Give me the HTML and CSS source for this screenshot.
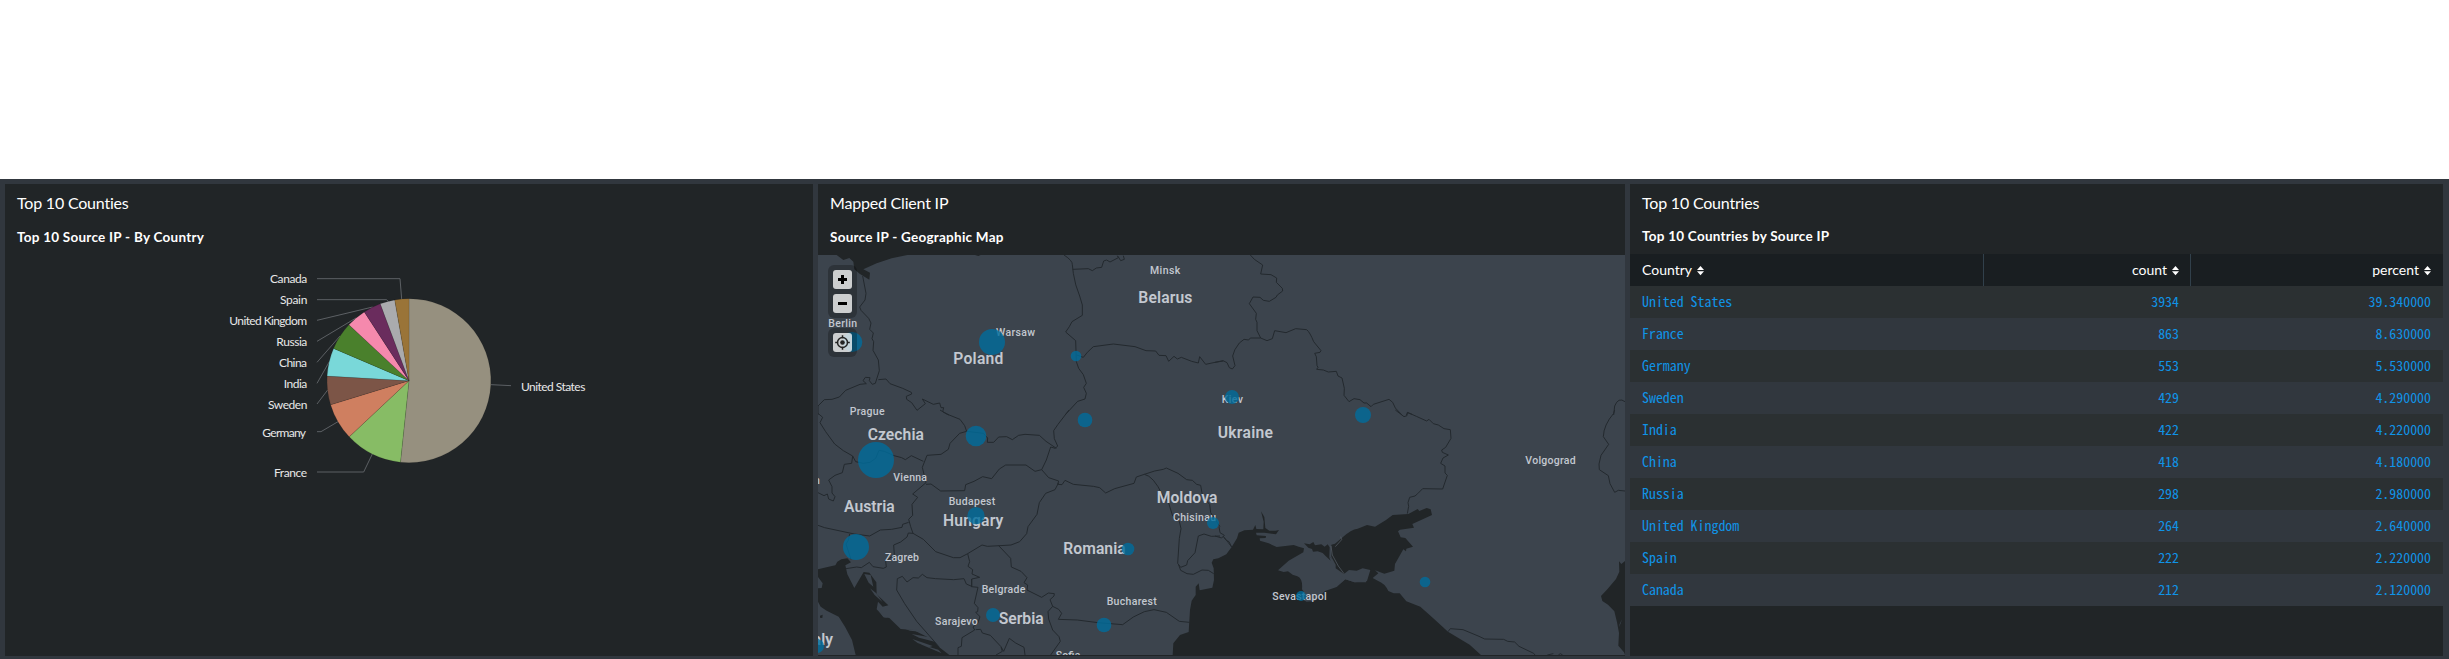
FILE: index.html
```
<!DOCTYPE html>
<html lang="en">
<head>
<meta charset="utf-8">
<title>Top 10 Countries</title>
<link rel="stylesheet" href="styles.css">
</head>
<body>
<main class="dashboard">
  <section class="panel">
    <h2 class="panel-title">Top 10 Counties</h2>
    <h3 class="panel-subtitle">Top 10 Source IP - By Country</h3>
    <svg class="pie" viewBox="-585 15 2424 1203">
      <g class="leaders">
        <path d="M351 86H600L605 147M351 149H560L566 156M351 211L518 171M351 274L468 204M351 337L420 258M351 400L388 335M351 462L383 420M351 545H363L414 515M351 666H491L517 612M873 404L933 407"/>
      </g>
      <g class="slices">
        <path fill="#96907f" d="M627 392V146A246 246 0 1 1 601.4 636.7Z"/>
        <path fill="#87bc65" d="M627 392L601.4 636.7A246 246 0 0 1 447.7 560.5Z"/>
        <path fill="#cf7f60" d="M627 392L447.7 560.5A246 246 0 0 1 391.8 464.3Z"/>
        <path fill="#7c5547" d="M627 392L391.8 464.3A246 246 0 0 1 381.4 378.3Z"/>
        <path fill="#79d8d9" d="M627 392L381.4 378.3A246 246 0 0 1 400.8 295.3Z"/>
        <path fill="#4a802c" d="M627 392L400.8 295.3A246 246 0 0 1 446.8 224.5Z"/>
        <path fill="#f589ad" d="M627 392L446.8 224.5A246 246 0 0 1 493 185.7Z"/>
        <path fill="#6a2c5d" d="M627 392L493 185.7A246 246 0 0 1 540.8 161.6Z"/>
        <path fill="#aaabae" d="M627 392L540.8 161.6A246 246 0 0 1 584.2 149.8Z"/>
        <path fill="#9a7438" d="M627 392L584.2 149.8A246 246 0 0 1 627 146Z"/>
      </g>
      <g class="pie-labels">
        <text x="210" y="99" textLength="112">Canada</text>
        <text x="240" y="162" textLength="82">Spain</text>
        <text x="88" y="225" textLength="233">United Kingdom</text>
        <text x="229" y="288" textLength="93">Russia</text>
        <text x="237" y="351" textLength="84">China</text>
        <text x="251" y="414" textLength="71">India</text>
        <text x="204" y="477" textLength="118">Sweden</text>
        <text x="187" y="561" textLength="131">Germany</text>
        <text x="222" y="681" textLength="99">France</text>
        <text x="963" y="423" textLength="193">United States</text>
      </g>
    </svg>
  </section>

  <section class="panel">
    <h2 class="panel-title">Mapped Client IP</h2>
    <h3 class="panel-subtitle">Source IP - Geographic Map</h3>
    <div class="map">
      <svg class="map-canvas" viewBox="0 0 2421 1200">
        <!-- north-west tile -->
        <g transform="translate(-24 -255)">
          <path class="water" d="M80 255L100 270L118 264L130 275L133 298L150 312L178 329L180 308L160 298L200 280L245 265L292 255ZM495 255L505 258L512 255Z"/>
          <path class="border" d="M158 318L168 370L165 390L149 411L153 421L176 445L183 459L179 478L190 489L186 506L191 515L189 541L205 570L208 602L196 640L187 643L178 632L180 623L166 622L159 632L169 641L150 643L107 661L88 681L66 688L43 689L24 708V735M205 629L228 627L240 641L278 655L304 667L305 672L289 679L290 688L305 698L321 721L346 701L337 687L370 703L389 699L393 713L401 713L398 725L417 735"/>
          <path class="border" d="M762 255Q788 272 787 284L790 310Q795 345 809 378L817 405V436L786 455L778 470L767 486L797 512L798 543L799 575L806 595L820 614L829 640L821 652L829 670L825 687L803 694L765 735M788 298L835 296L847 302L859 294L875 292L881 273L890 270L900 276L925 263L922 257M940 257L943 268L932 272L924 259M800 555L820 562L832 547L850 530L910 522L975 530L1008 542L1037 543L1047 556L1068 557L1076 574L1092 559L1102 567L1114 562L1145 574L1165 579L1169 560L1187 583L1215 577L1240 573"/>
        </g>
        <!-- north-east tile -->
        <g transform="translate(1191 -255)">
          <path class="border" d="M106 255L118 268L143 285L137 312L168 314L185 324L184 337L202 355L203 363L187 375L183 382L163 394L145 391L135 382L114 381L103 401L124 430L122 448L126 457V482L137 504L156 512L172 506L179 482L213 488L242 476L275 479Q285 487 296 515L318 542L315 547L299 550L304 560L306 587L309 592L305 598L325 600L340 606L364 604L369 618L381 624L388 655L387 676L402 695L417 686L435 689L447 699L455 699L468 710L475 703L522 688L533 697L541 714L561 735M137 504L106 504L101 510L87 508L73 519Q56 540 53 558L60 587L52 597L43 593L36 578L24 572L0 577M574 735L578 728L591 733M1196 735L1199 708Q1210 680 1230 695"/>
        </g>
        <!-- south-west tile -->
        <g transform="translate(-24 465)">
          <path class="water" d="M24 478L56 470L76 466L82 455L94 448L112 445L123 457L106 466L112 493L133 534L150 505L161 486L178 488L199 517L200 553L235 586L218 590L204 575L200 598L222 622L238 624L272 657L310 660L370 690L388 712L418 735H137L126 690L105 650L86 620L50 602L32 590L24 575V535L35 534L38 520L24 501ZM30 617L38 614L37 624L30 623Z"/>
          <path class="land" d="M163 492L182 495L190 530L176 518ZM180 535L199 550L218 577L194 555ZM205 601L232 623L220 622ZM286 657L322 659L331 665L300 662ZM305 672L360 682L374 695L327 683ZM307 687L368 708L357 712L323 699ZM330 702L385 719L395 730Z"/>
          <path class="border" d="M24 10L38 22L30 38L47 65L74 102L100 122L128 138L137 155L160 160L180 157L197 145L207 121L223 124L252 137L275 143L286 149L304 137L340 154M128 138L125 160L103 163L97 188L75 196L56 210L66 230V249L75 260L70 273L56 267L52 252L42 257L24 248M390 0L410 12L450 28L464 47L470 64L449 70L420 100L415 118L393 133L351 136L337 172L348 218L308 252L323 262L306 283L308 316L296 328L302 350L309 370L340 388L377 425L430 443L450 443L473 431L516 405L532 409L570 407L603 405L629 395L650 371L654 350L681 313L688 278L707 250L735 239L746 218M470 64L520 70L533 84L532 97H551L566 81L590 80L607 89L626 76L645 73L688 76L708 94L739 115M722 111L709 150L695 179L675 184L648 165L587 165L568 177L545 206L518 200L492 214L467 224L464 242L392 243L363 222L348 223M777 0L744 43L731 62L733 86L743 108L736 115L722 111M695 179L716 203L746 213L743 223L756 224L765 211L790 223L850 229L869 233L887 249L914 236L972 220L979 201L1003 193L1034 183L1060 178L1069 174L1104 190L1130 209L1147 211L1160 223L1172 226L1178 260L1199 283L1202 308L1230 350"/>
          <path class="border" d="M1003 193Q1030 198 1057 254L1075 276L1088 318L1108 334L1113 356L1108 385L1103 460L1112 472L1130 465L1133 452L1155 428L1165 378L1182 372L1204 379L1230 378M1105 462L1112 481L1131 491L1150 493L1176 480L1195 481L1211 491M24 346L44 353L133 372L179 378L211 360L245 358L276 352L278 343L296 337M119 372L115 391L108 402L123 448M108 476L140 471L154 473L178 457L189 470L220 475L229 471L227 454L253 434L251 405L272 396L291 381L295 369L309 370M473 431L479 455L474 469L488 479L486 492L509 502L485 507V531M485 507V529L469 522L462 506L431 509L377 506L351 503L337 493L325 504L309 503L291 516L277 499L262 506L260 540L284 581L320 634L357 676L388 712M566 407L602 445L604 471L633 484L651 503L642 518L653 525L651 540L695 562L715 549L733 551L732 558L720 569L728 589L714 605L716 627L728 660L747 680L751 694L722 735M484 530L504 532L493 580L504 593L503 605L497 607L510 620L503 640L489 651L494 660L456 683L454 709L444 713V735M497 659L512 658L517 669L541 676L573 710L581 724L598 685L617 699L642 712L645 735M573 712L577 724L558 735M728 589L746 598L755 610L745 628L802 630L864 638L938 644L970 621L1003 605L1032 599L1069 607L1108 634L1138 637"/>
        </g>
        <!-- south-east tile -->
        <g transform="translate(1191 465)">
          <path class="water" d="M-127 735L-125 700L-105 675L-79 666L-75 600L-70 572L-58 555L-58 530L-49 520L-46 541L-8 533L-3 510L-4 475L-10 458L-5 448L10 445L34 433L50 411L66 385L71 368L88 361L114 359L121 345L124 357L145 358L146 335L138 304L148 321L151 354L163 362H182L192 360L183 373L148 368L123 368L125 376L153 378L152 384L134 385L135 392L161 400L185 411L236 405L251 410L267 415L265 427L221 452L189 481L206 486L219 484L233 494L247 499Q264 506 261 538L268 548L255 565L275 575L300 572L330 543L365 531L391 508L419 517L453 517L463 483L387 492L362 475V464L349 440V404L360 401L383 382Q408 358 428 356L456 345L480 350L513 330L533 315L580 312L608 297L613 303L635 294L647 298L651 315L592 342L597 353L555 359L549 364L557 382L571 384L594 410L574 416L573 424L565 418L540 462L538 482L508 491L480 481L490 490L473 504L488 512Q510 520 520 543L536 550H554L574 574L616 590L654 624L699 665L764 704L798 735ZM267 400L284 403L295 396L300 406L319 403L329 410L338 403L344 412L343 440L357 450L342 440L347 452L331 437L323 429L308 424L294 425L291 417L280 413Z"/>
          <path class="land" d="M387 492L402 480L425 482L443 475L466 480L456 513L419 517L391 508L370 524Z"/>
          <path class="spit" d="M348 408L352 435L370 468L387 491M361 410L380 389L377 380"/>
          <path class="water" d="M1230 453L1219 462L1212 454L1213 485L1203 507L1177 538L1158 558L1162 573L1179 584L1198 604L1206 637L1212 669L1210 707L1227 727L1230 735Z"/>
          <path class="land" d="M1221 627L1214 642L1212 652L1217 640Z"/>
          <path class="border" d="M12 350L15 368L28 376L20 384L0 378M24 378L34 391L42 395L50 411M27 382L40 398L50 411M541 0L567 20L576 17L577 7L604 19L635 33L642 28L655 41L670 45L687 56L706 59L708 85L692 112L680 120L682 127L700 135L684 144L677 160L690 168V189L697 196L683 237L623 236L608 251L600 258L584 262L579 278L581 289L577 311M1199 0L1196 10Q1166 45 1165 80L1181 103L1158 136L1152 162L1153 179L1180 197L1185 221L1199 247L1210 241L1230 243M699 665L706 656L744 659L792 679L809 687L866 688L878 694L899 696L912 709L956 730L960 735M997 735L1015 731M1030 735L1036 731L1043 735"/>
        </g>
        <g class="labels">
          <g transform="translate(-24 -255)">
            <text x="1020" y="312" textLength="91">Minsk</text>
            <text x="55" y="470" textLength="86">Berlin</text>
            <text x="558" y="499" textLength="117">Warsaw</text>
            <text x="119" y="735" textLength="105">Prague</text>
            <text class="country" x="985" y="399" textLength="162">Belarus</text>
            <text class="country" x="430" y="582" textLength="150">Poland</text>
          </g>
          <g transform="translate(1191 -255)"><text x="20" y="699" textLength="64">Kiev</text></g>
          <g transform="translate(-24 465)">
            <text x="250" y="213" textLength="101">Vienna</text>
            <text x="416" y="285" textLength="140">Budapest</text>
            <text x="225" y="454" textLength="102">Zagreb</text>
            <text x="515" y="549" textLength="131">Belgrade</text>
            <text x="375" y="644" textLength="128">Sarajevo</text>
            <text x="890" y="585" textLength="150">Bucharest</text>
            <text x="1089" y="334" textLength="129">Chisinau</text>
            <text x="737" y="746" textLength="74">Sofia</text>
            <text x="12" y="221">n</text>
            <text class="country" x="173" y="89" textLength="169">Czechia</text>
            <text class="country" x="102" y="305" textLength="152">Austria</text>
            <text class="country" x="399" y="347" textLength="181">Hungary</text>
            <text class="country" x="760" y="431" textLength="187">Romania</text>
            <text class="country" x="1040" y="278" textLength="182">Moldova</text>
            <text class="country" x="566" y="643" textLength="135">Serbia</text>
            <text class="country" x="-21" y="705" textLength="90">Italy</text>
          </g>
          <g transform="translate(1191 465)">
            <text class="country" x="8" y="84" textLength="166">Ukraine</text>
            <text x="931" y="161" textLength="151">Volgograd</text>
            <text x="172" y="569" textLength="163">Sevastapol</text>
          </g>
        </g>
        <g class="markers">
          <g transform="translate(-24 -255)">
            <circle cx="127" cy="516" r="30"/><circle cx="546" cy="516" r="39"/><circle cx="798" cy="558" r="16"/>
          </g>
          <g transform="translate(1191 -255)"><circle cx="51" cy="681" r="21"/></g>
          <g transform="translate(-24 465)">
            <circle cx="825" cy="30" r="22"/><circle cx="498" cy="78" r="31"/><circle cx="198" cy="150" r="54"/>
            <circle cx="498" cy="317" r="26"/><circle cx="138" cy="411" r="39"/><circle cx="954" cy="417" r="19"/>
            <circle cx="1209" cy="339" r="18"/><circle cx="549" cy="615" r="21"/><circle cx="882" cy="645" r="22"/>
            <circle cx="21" cy="708" r="21"/>
          </g>
          <g transform="translate(1191 465)">
            <circle cx="444" cy="15" r="24"/><circle cx="630" cy="516" r="16"/><circle cx="258" cy="558" r="15"/>
          </g>
        </g>
      </svg>
      <div class="map-controls">
        <div class="control-group">
          <button class="control" aria-label="Zoom in"><svg viewBox="0 0 19 19"><path d="M9.5 5v9M5 9.5h9" stroke="#000" stroke-width="3"/></svg></button>
          <button class="control" aria-label="Zoom out"><svg viewBox="0 0 19 19"><path d="M5 9.5h9" stroke="#000" stroke-width="3"/></svg></button>
        </div>
        <div class="control-group">
          <button class="control" aria-label="Locate"><svg viewBox="0 0 19 19"><circle cx="9.5" cy="9.5" r="5" fill="none" stroke="#222" stroke-width="1.4"/><circle cx="9.5" cy="9.5" r="2.3" fill="#222"/><path d="M9.5 2.2v3M9.5 13.8v3M2.2 9.5h3M13.8 9.5h3" stroke="#222" stroke-width="1.5"/></svg></button>
        </div>
      </div>
    </div>
  </section>

  <section class="panel">
    <h2 class="panel-title">Top 10 Countries</h2>
    <h3 class="panel-subtitle panel-subtitle--table">Top 10 Countries by Source IP</h3>
    <table class="results">
      <thead>
        <tr>
          <th class="c-country">Country<svg class="sort" viewBox="0 0 7 9"><path d="M0 4L3.5 0L7 4ZM0 5.2H7L3.5 9.2Z"/></svg></th>
          <th class="c-count">count<svg class="sort" viewBox="0 0 7 9"><path d="M0 4L3.5 0L7 4ZM0 5.2H7L3.5 9.2Z"/></svg></th>
          <th class="c-percent">percent<svg class="sort" viewBox="0 0 7 9"><path d="M0 4L3.5 0L7 4ZM0 5.2H7L3.5 9.2Z"/></svg></th>
        </tr>
      </thead>
      <tbody>
        <tr><td>United States</td><td>3934</td><td>39.340000</td></tr>
        <tr><td>France</td><td>863</td><td>8.630000</td></tr>
        <tr><td>Germany</td><td>553</td><td>5.530000</td></tr>
        <tr><td>Sweden</td><td>429</td><td>4.290000</td></tr>
        <tr><td>India</td><td>422</td><td>4.220000</td></tr>
        <tr><td>China</td><td>418</td><td>4.180000</td></tr>
        <tr><td>Russia</td><td>298</td><td>2.980000</td></tr>
        <tr><td>United Kingdom</td><td>264</td><td>2.640000</td></tr>
        <tr><td>Spain</td><td>222</td><td>2.220000</td></tr>
        <tr><td>Canada</td><td>212</td><td>2.120000</td></tr>
      </tbody>
    </table>
  </section>
</main>
</body>
</html>
```
FILE: styles.css
```
* { box-sizing: border-box; }
body {
  margin: 0;
  padding-top: 179px;
  height: 659px;
  background: #fff;
  font-family: Lato, "Liberation Sans", sans-serif;
  overflow: hidden;
}
.dashboard {
  display: grid;
  grid-template-columns: 808px 807px 813px;
  gap: 5px;
  height: 480px;
  padding: 5px 6px 3px 5px;
  background: #31373e;
}
.panel {
  display: flex;
  flex-direction: column;
  min-width: 0;
  background: #212527;
  color: #fff;
}
.panel-title {
  margin: 0;
  padding: 8px 12px 0;
  height: 39px;
  font-size: 16px;
  line-height: 22px;
  font-weight: 400;
  letter-spacing: -.2px;
}
.panel-subtitle {
  margin: 0;
  padding: 4px 12px 0;
  height: 32px;
  font-size: 13.5px;
  line-height: 20px;
  font-weight: 700;
  letter-spacing: .25px;
}
.panel-subtitle--table { height: 31px; padding-top: 3px; }
.pie { display: block; width: 808px; height: 401px; }
.leaders path { fill: none; stroke: #5c6064; stroke-width: 3; }
.slices path { stroke: rgba(0, 0, 0, .2); stroke-width: 1.5; }
.pie-labels { font: 36px Lato, sans-serif; fill: #e8e8e8; }
.map {
  position: relative;
  height: 400px;
  background: #3c444d;
  overflow: hidden;
}
.map-canvas { display: block; width: 807px; height: 400px; }
.water { fill: #212527; }
.land { fill: #3c444d; }
.spit { fill: none; stroke: #59616a; stroke-width: 2; }
.border { fill: none; stroke: #23292e; stroke-width: 3; stroke-linejoin: round; }
.labels { font: 500 31.5px Roboto, sans-serif; fill: #c3c8d0; }
.labels .country { font-size: 47px; font-weight: 600; }
.markers { fill: #006d9c; fill-opacity: .8; }
.map-controls {
  position: absolute;
  top: 10px;
  left: 10px;
  display: flex;
  flex-direction: column;
  gap: 10px;
}
.control-group {
  display: flex;
  flex-direction: column;
  gap: 5px;
  padding: 5px;
  border-radius: 6px;
  background: rgba(0, 0, 0, .25);
}
.control {
  width: 19px;
  height: 19px;
  padding: 0;
  border: 0;
  border-radius: 3px;
  background: rgba(255, 255, 255, .76);
}
.control svg { display: block; width: 19px; height: 19px; }
.results {
  width: 813px;
  table-layout: fixed;
  border-collapse: collapse;
}
.results tr { height: 32px; }
.results th {
  padding: 0 12px 2px;
  background: #191e21;
  font-size: 14px;
  font-weight: 400;
  text-align: right;
}
.results .c-country { width: 354px; text-align: left; }
.results .c-count { width: 207px; }
.results th:not(:last-child) { box-shadow: inset -1px 0 #31404b; }
.sort { width: 7px; height: 9px; margin-left: 5px; fill: #fff; overflow: visible; }
.results td {
  padding: 0 12px 2px;
  font: 13.9px/20px "Noto Sans Mono CJK SC", "DejaVu Sans Mono", monospace;
  text-align: right;
  color: #1093e6;
}
.results td:first-child { text-align: left; }
.results tbody tr:nth-child(odd) { background: #2b3032; }
.results tbody tr:nth-child(even) { background: #31373e; }
```
